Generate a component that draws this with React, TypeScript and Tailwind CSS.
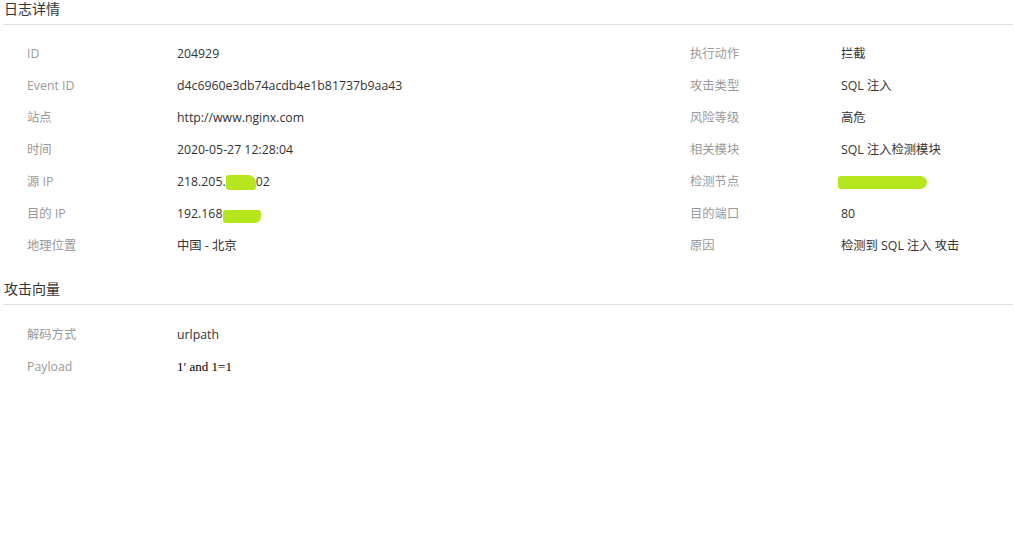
import React from 'react'

const font = { fontFamily: '"Open Sans", "Noto Sans CJK SC", sans-serif' }

const Blot = ({ w, h, className = '' }: { w: string; h: string; className?: string }) => (
  <span className={`inline-block align-middle bg-[#b5e61d] rounded-[3px] ${w} ${h} ${className}`} />
)

interface Item {
  label: string
  value: React.ReactNode
}

const Row = ({ left, right }: { left: Item; right?: Item }) => (
  <div className="flex h-[32px] items-center text-[12.3px]">
    <div className="flex w-[663px] items-center">
      <span className="w-[150px] text-[#999]">{left.label}</span>
      <span className="text-[#333]">{left.value}</span>
    </div>
    {right && (
      <div className="flex items-center">
        <span className="w-[151px] text-[#999]">{right.label}</span>
        <span className="text-[#333]">{right.value}</span>
      </div>
    )}
  </div>
)

const Section = ({ title, children, className = '' }: { title: string; children: React.ReactNode; className?: string }) => (
  <div className={className}>
    <div className="border-b border-[#e0e0e0] pb-[6px] pl-[1px] text-[14px] leading-[18px] text-[#333]">{title}</div>
    <div className="pl-[24px]">{children}</div>
  </div>
)

export default function App() {
  return (
    <div className="min-h-[540px] w-[1014px] bg-white pl-[3px] pr-[1px]" style={font}>
      <Section title="日志详情">
        <div className="pt-[13px]">
          <Row left={{ label: 'ID', value: '204929' }} right={{ label: '执行动作', value: '拦截' }} />
          <Row
            left={{ label: 'Event ID', value: 'd4c6960e3db74acdb4e1b81737b9aa43' }}
            right={{ label: '攻击类型', value: 'SQL 注入' }}
          />
          <Row left={{ label: '站点', value: 'http://www.nginx.com' }} right={{ label: '风险等级', value: '高危' }} />
          <Row
            left={{ label: '时间', value: '2020-05-27 12:28:04' }}
            right={{ label: '相关模块', value: 'SQL 注入检测模块' }}
          />
          <Row
            left={{
              label: '源 IP',
              value: (
                <>
                  218.205.
                  <Blot w="w-[30px]" h="h-[15px]" className="rounded-tr-[8px]" />
                  02
                </>
              ),
            }}
            right={{ label: '检测节点', value: <Blot w="w-[89px]" h="h-[13px]" className="-ml-[3px] rounded-r-[7px]" /> }}
          />
          <Row
            left={{
              label: '目的 IP',
              value: (
                <>
                  192.168.
                  <Blot w="w-[38px]" h="h-[13px]" className="-ml-[3px] mt-[4px] rounded-br-[6px]" />
                </>
              ),
            }}
            right={{ label: '目的端口', value: '80' }}
          />
          <Row left={{ label: '地理位置', value: '中国 - 北京' }} right={{ label: '原因', value: '检测到 SQL 注入 攻击' }} />
        </div>
      </Section>
      <Section title="攻击向量" className="mt-[18px]">
        <div className="pt-[14px]">
          <Row left={{ label: '解码方式', value: 'urlpath' }} />
          <Row
            left={{
              label: 'Payload',
              value: (
                <span
                  className="text-[13px] text-black"
                  style={{ fontFamily: '"Liberation Serif", "Noto Sans CJK SC", serif' }}
                >
                  1′ and 1=1
                </span>
              ),
            }}
          />
        </div>
      </Section>
    </div>
  )
}
